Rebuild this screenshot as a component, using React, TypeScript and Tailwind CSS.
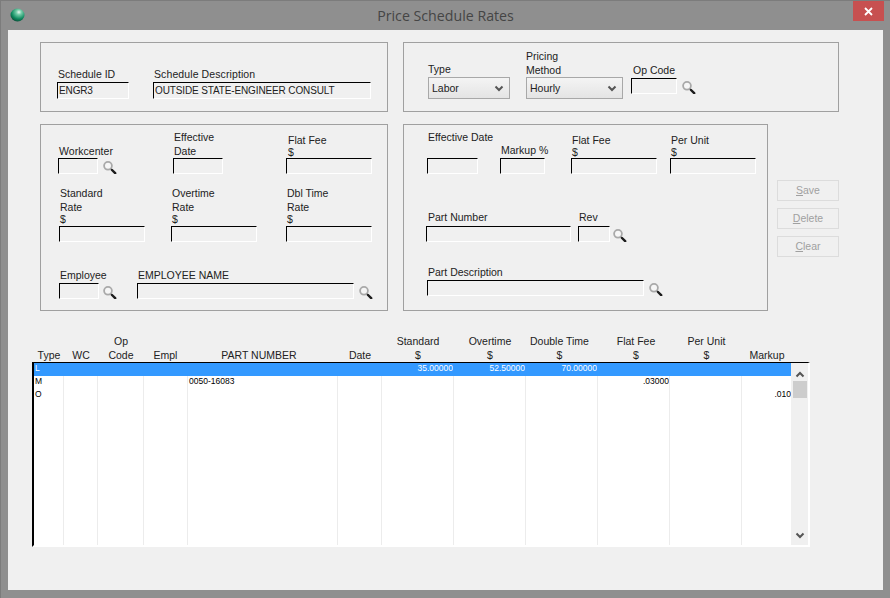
import React from "react";

const Lens = ({ className = "" }: { className?: string }) => (
  <svg width="14" height="13" viewBox="0 0 14 13" fill="none" className={`shrink-0 ${className}`}>
    <circle cx="5" cy="4.8" r="3.9" fill="#f6f6f6" stroke="#a9a9a9" strokeWidth="1.8" />
    <path d="M8 8 L9 9" stroke="#777" strokeWidth="1.6" />
    <path d="M9 9 L12.2 12.2" stroke="#1c1c1c" strokeWidth="2.4" strokeLinecap="round" />
  </svg>
);

const Chevron = ({ up = false }: { up?: boolean }) => (
  <svg width="10" height="7" viewBox="0 0 10 7" fill="none" className="shrink-0">
    <path d={up ? "M1.5 5.5 L5 2 L8.5 5.5" : "M1.5 1.5 L5 5 L8.5 1.5"} stroke="#555" strokeWidth="2" />
  </svg>
);

const Input = ({ className = "", children }: { className?: string; children?: React.ReactNode }) => (
  <div className={`border-t border-l border-t-black border-l-black border-r border-b border-r-white border-b-white bg-[#f0f0f0] text-[10px] tracking-[-0.13px] leading-[15px] pl-px overflow-hidden whitespace-nowrap ${className}`}>
    {children}
  </div>
);

const Field = ({
  lines,
  w,
  h = "h-[16px]",
  labelClass = "pl-px",
  mb = "mb-px",
  value,
  className = "",
}: {
  lines: string[];
  w: string;
  h?: string;
  labelClass?: string;
  mb?: string;
  value?: string;
  className?: string;
}) => (
  <div className={`flex flex-col shrink-0 ${w} ${className}`}>
    <div className={`text-[10.5px] whitespace-nowrap ${mb} ${labelClass}`}>
      {lines.map((l, i) => (
        <div key={i} className={l === "$" ? "leading-[11px]" : "leading-[14px]"}>
          {l}
        </div>
      ))}
    </div>
    <Input className={`w-full ${h}`}>{value}</Input>
  </div>
);

const Select = ({ text, w, className = "" }: { text: string; w: string; className?: string }) => (
  <div className={`flex items-center justify-between h-[22px] border border-[#a8a8a8] bg-gradient-to-b from-[#f4f4f4] to-[#e4e4e4] pl-[3px] pr-[5px] pt-px text-[10.5px] ${w} ${className}`}>
    <span>{text}</span>
    <Chevron />
  </div>
);

const Panel = ({ className = "", children }: { className?: string; children: React.ReactNode }) => (
  <div className={`border border-[#a0a0a0] shrink-0 ${className}`}>{children}</div>
);

const Btn = ({ first, rest }: { first: string; rest: string }) => (
  <div className="flex items-center justify-center w-[62px] h-[21px] border border-[#dcdcdc] text-[10.5px] text-[#a0a0a0]">
    <span className="underline">{first}</span>
    {rest}
  </div>
);

const cols = "grid grid-cols-[30px_34px_46px_44px_150px_44px_72px_72px_72px_72px_72px_49px]";

const headers: { lines: string[]; cls?: string }[] = [
  { lines: ["Type"] },
  { lines: ["WC"] },
  { lines: ["Op", "Code"] },
  { lines: ["Empl"], cls: "pr-px" },
  { lines: ["PART NUMBER"], cls: "pr-[8px]" },
  { lines: ["Date"] },
  { lines: ["Standard", "$"] },
  { lines: ["Overtime", "$"] },
  { lines: ["Double Time", "$"], cls: "pr-[5px]" },
  { lines: ["Flat Fee", "$"], cls: "pl-[4px]" },
  { lines: ["Per Unit", "$"], cls: "pl-px" },
  { lines: ["Markup"], cls: "pl-px" },
];

const rows: { cells: string[]; sel?: boolean }[] = [
  { cells: ["L", "", "", "", "", "", "35.00000", "52.50000", "70.00000", "", "", ""], sel: true },
  { cells: ["M", "", "", "", "0050-16083", "", "", "", "", ".03000", "", ""] },
  { cells: ["O", "", "", "", "", "", "", "", "", "", "", ".010"] },
];

const Cell = ({ i, text, sel }: { i: number; text: string; sel?: boolean }) => {
  const right = i >= 6;
  return (
    <div
      className={`h-[13px] overflow-hidden whitespace-nowrap text-[8.5px] leading-[11px] ${right ? "text-right" : "text-left pl-[1px]"} ${i === 11 ? "" : "border-r"} ${sel ? "border-r-[#3399ff] text-white" : "border-r-[#ececec] text-black"}`}
    >
      {text}
    </div>
  );
};

export default function App() {
  return (
    <div className="w-[890px] h-[598px] flex flex-col bg-[#8f8f8f] border-t border-l border-[#7c7c7c] text-[#222] font-['Liberation_Sans',Arial,sans-serif] overflow-hidden">
      <div className="h-[29px] shrink-0 flex items-start">
        <svg width="16" height="16" viewBox="0 0 16 16" className="ml-[9px] mt-[6px] shrink-0">
          <defs>
            <radialGradient id="sph" cx="0.6" cy="0.28" r="0.8">
              <stop offset="0" stopColor="#e8f6ee" />
              <stop offset="0.25" stopColor="#6fcaa5" />
              <stop offset="0.65" stopColor="#0f8a5f" />
              <stop offset="1" stopColor="#0c3f30" />
            </radialGradient>
          </defs>
          <ellipse cx="7.5" cy="8" rx="7" ry="6.5" fill="url(#sph)" />
        </svg>
        <div className="flex-1 text-center text-[14.2px] leading-[30px] text-[#454545] font-['Open_Sans',sans-serif] pl-[12px]">
          Price Schedule Rates
        </div>
        <div className="w-[31px] h-[20px] bg-[#c75050] flex items-center justify-center mr-[6px] shrink-0">
          <svg width="9" height="9" viewBox="0 0 9 9">
            <path d="M1 1 L8 8 M8 1 L1 8" stroke="#fff" strokeWidth="1.8" />
          </svg>
        </div>
      </div>

      <div className="w-[875px] h-[560px] ml-[7px] bg-[#f0f0f0] pt-[12px] pl-[32px] shrink-0">
        <div className="flex">
          <Panel className="w-[348px] h-[70px]">
            <div className="flex items-end h-[56px]">
              <Field lines={["Schedule ID"]} w="w-[72px]" h="h-[17px]" value="ENGR3" className="ml-[16px]" />
              <Field lines={["Schedule Description"]} w="w-[218px]" h="h-[17px]" labelClass="pl-px tracking-[0.1px]" value="OUTSIDE STATE-ENGINEER CONSULT" className="ml-[24px]" />
            </div>
          </Panel>
          <Panel className="w-[436px] h-[70px] ml-[15px]">
            <div className="flex items-end h-[56px]">
              <div className="ml-[24px] w-[82px] flex flex-col">
                <div className="text-[10.5px] leading-[14px] mb-px">Type</div>
                <Select text="Labor" w="w-full" />
              </div>
              <div className="ml-[16px] w-[97px] flex flex-col">
                <div className="text-[10.5px] leading-[14px]">
                  <div>Pricing</div>
                  <div>Method</div>
                </div>
                <Select text="Hourly" w="w-full" />
              </div>
              <Field lines={["Op Code"]} w="w-[46px]" labelClass="pl-[2px]" className="ml-[8px] mb-[5px]" />
              <Lens className="ml-[5px] mb-[5px]" />
            </div>
          </Panel>
        </div>

        <div className="flex mt-[12px]">
          <Panel className="w-[348px] h-[187px]">
            <div className="flex items-end h-[49px]">
              <Field lines={["Workcenter"]} w="w-[40px]" mb="mb-0" labelClass="pl-px tracking-[0.05px]" className="ml-[17px]" />
              <Lens className="ml-[5px]" />
              <Field lines={["Effective", "Date"]} w="w-[50px]" mb="mb-0" className="ml-[56px]" />
              <Field lines={["Flat Fee", "$"]} w="w-[86px]" mb="mb-0" labelClass="pl-[2px]" className="ml-[63px]" />
            </div>
            <div className="flex items-end h-[68px]">
              <Field lines={["Standard", "Rate", "$"]} w="w-[86px]" className="ml-[18px]" />
              <Field lines={["Overtime", "Rate", "$"]} w="w-[86px]" className="ml-[26px]" />
              <Field lines={["Dbl Time", "Rate", "$"]} w="w-[86px]" className="ml-[29px]" />
            </div>
            <div className="flex items-end h-[57px]">
              <Field lines={["Employee"]} w="w-[40px]" className="ml-[18px]" />
              <Lens className="ml-[4px]" />
              <Field lines={["EMPLOYEE NAME"]} w="w-[217px]" className="ml-[20px]" />
              <Lens className="ml-[5px]" />
            </div>
          </Panel>

          <Panel className="w-[365px] h-[187px] ml-[15px]">
            <div className="flex items-end h-[49px]">
              <Field lines={["Effective Date", "\u00a0"]} w="w-[51px]" mb="mb-0" className="ml-[23px]" />
              <Field lines={["Markup %"]} w="w-[45px]" className="ml-[22px]" />
              <Field lines={["Flat Fee", "$"]} w="w-[86px]" mb="mb-0" className="ml-[26px]" />
              <Field lines={["Per Unit", "$"]} w="w-[86px]" mb="mb-0" className="ml-[13px]" />
            </div>
            <div className="flex items-end h-[68px]">
              <Field lines={["Part Number"]} w="w-[145px]" mb="mb-[2px]" labelClass="pl-[2px]" className="ml-[22px]" />
              <Field lines={["Rev"]} w="w-[32px]" mb="mb-[2px]" className="ml-[7px]" />
              <Lens className="ml-[3px]" />
            </div>
            <div className="flex items-end h-[54px]">
              <Field lines={["Part Description"]} w="w-[217px]" className="ml-[23px]" />
              <Lens className="ml-[5px]" />
            </div>
          </Panel>

          <div className="flex flex-col gap-[7px] ml-[9px] mt-[56px]">
            <Btn first="S" rest="ave" />
            <Btn first="D" rest="elete" />
            <Btn first="C" rest="lear" />
          </div>
        </div>

        <div className={`${cols} w-[759px] pl-[2px] -ml-[8px] mt-[23px] h-[28px] box-content text-[10.5px] leading-[14px]`}>
          {headers.map((h, i) => (
            <div key={i} className={`flex flex-col items-center justify-end whitespace-nowrap ${h.cls ?? ""}`}>
              {h.lines.map((l, j) => (
                <div key={j}>{l}</div>
              ))}
            </div>
          ))}
        </div>

        <div className="-ml-[8px] w-[778px] h-[185px] flex border-t border-t-black border-l-2 border-l-black border-r-2 border-r-white border-b-2 border-b-white bg-white">
          <div className={`${cols} grid-rows-[13px_13px_13px_1fr] w-[757px] h-full`}>
            {rows.map((r, ri) =>
              r.cells.map((c, i) => (
                <div key={`${ri}-${i}`} className={r.sel ? "bg-[#3399ff]" : ""}>
                  <Cell i={i} text={c} sel={r.sel} />
                </div>
              ))
            )}
            {headers.map((_, i) => (
              <div key={i} className={i === 11 ? "" : "border-r border-r-[#ececec]"} />
            ))}
          </div>
          <div className="w-[17px] h-full bg-[#f0f0f0] flex flex-col items-center">
            <div className="mt-[8px] h-[7px] flex items-center">
              <Chevron up />
            </div>
            <div className="mt-[3px] w-[14px] h-[17px] bg-[#cdcdcd]" />
            <div className="mt-auto mb-[6px] flex">
              <Chevron />
            </div>
          </div>
        </div>
      </div>
    </div>
  );
}
